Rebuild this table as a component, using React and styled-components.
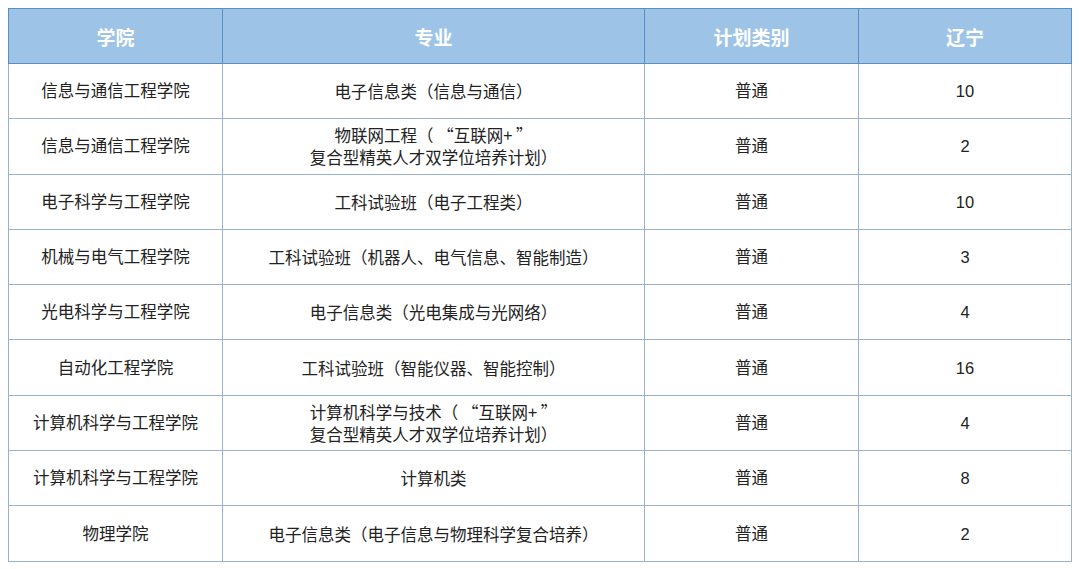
import styled, { createGlobalStyle } from "styled-components"

const GlobalStyle = createGlobalStyle`
    html, body {
        margin: 0;
        padding: 0;
        background: #ffffff;
    }
    body {
        font-family: "Liberation Sans", "Noto Sans CJK SC", sans-serif;
    }
`

const Page = styled.div`
    padding: 8px 8px 0 8px;
`

const Table = styled.table`
    border-collapse: collapse;
    table-layout: fixed;
    border: 1.5px solid #5b8cc4;
`

const HeadCell = styled.th`
    height: 54px;
    padding: 0;
    background: #9dc3e6;
    color: #ffffff;
    font-size: 19px;
    font-weight: bold;
    text-align: center;
    border: 1.5px solid #5b8cc4;
    width: ${({ w }) => w}px;
`

const Cell = styled.td`
    height: 54.3px;
    padding: 0;
    color: #222222;
    font-size: 16.5px;
    line-height: 22px;
    text-align: center;
    vertical-align: middle;
    border: 1px solid #98b2cf;
`

const Line = styled.div`
    font-family: "Noto Sans CJK SC", sans-serif;
    white-space: pre;
`

const columns = [
    { name: "学院", w: 213 },
    { name: "专业", w: 421 },
    { name: "计划类别", w: 213 },
    { name: "辽宁", w: 212 }
]

const rows = [
    ["信息与通信工程学院", ["电子信息类（信息与通信）"], "普通", "10"],
    ["信息与通信工程学院", ["物联网工程（ “互联网+ ”", "复合型精英人才双学位培养计划）"], "普通", "2"],
    ["电子科学与工程学院", ["工科试验班（电子工程类）"], "普通", "10"],
    ["机械与电气工程学院", ["工科试验班（机器人、电气信息、智能制造）"], "普通", "3"],
    ["光电科学与工程学院", ["电子信息类（光电集成与光网络）"], "普通", "4"],
    ["自动化工程学院", ["工科试验班（智能仪器、智能控制）"], "普通", "16"],
    ["计算机科学与工程学院", ["计算机科学与技术（ “互联网+ ”", "复合型精英人才双学位培养计划）"], "普通", "4"],
    ["计算机科学与工程学院", ["计算机类"], "普通", "8"],
    ["物理学院", ["电子信息类（电子信息与物理科学复合培养）"], "普通", "2"]
]

const App = () => (
    <Page>
        <GlobalStyle />
        <Table>
            <thead>
                <tr>
                    {columns.map((c) => (
                        <HeadCell key={c.name} w={c.w}>
                            {c.name}
                        </HeadCell>
                    ))}
                </tr>
            </thead>
            <tbody>
                {rows.map((r, i) => (
                    <tr key={i}>
                        <Cell>{r[0]}</Cell>
                        <Cell>
                            {r[1].map((line, j) => (
                                <Line key={j}>{line}</Line>
                            ))}
                        </Cell>
                        <Cell>{r[2]}</Cell>
                        <Cell>{r[3]}</Cell>
                    </tr>
                ))}
            </tbody>
        </Table>
    </Page>
)

export default App
